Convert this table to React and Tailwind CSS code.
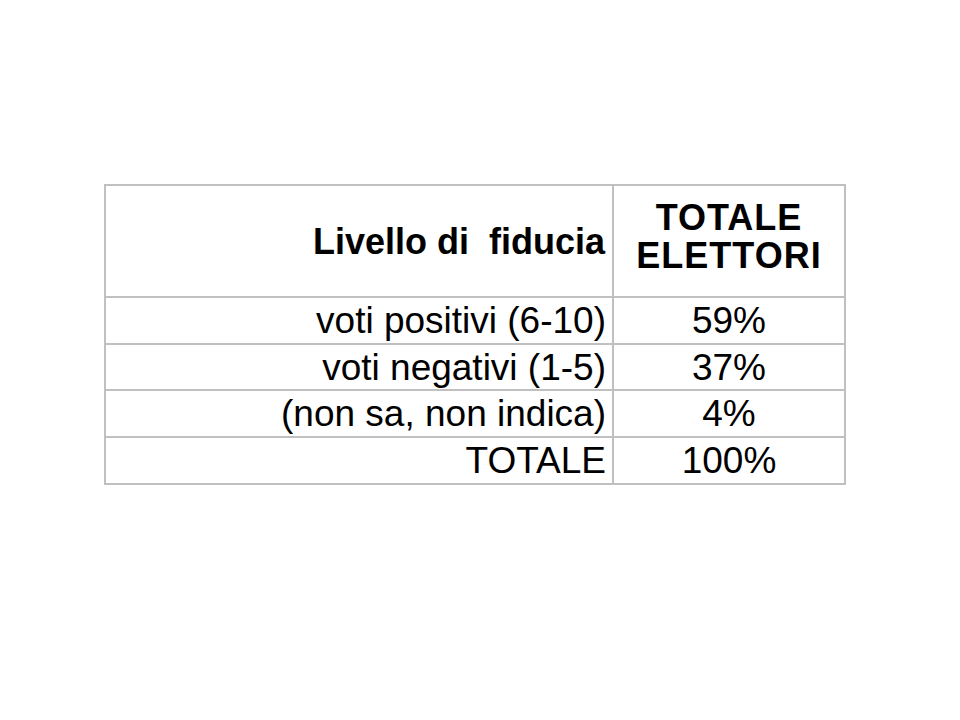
const rows = [
  { label: "voti positivi (6-10)", value: "59%", h: "h-[47px]" },
  { label: "voti negativi (1-5)", value: "37%", h: "h-[46px]" },
  { label: "(non sa, non indica)", value: "4%", h: "h-[47px]" },
  { label: "TOTALE", value: "100%", h: "h-[47px]" },
];

export default function App() {
  return (
    <main
      className="min-h-[720px] w-[960px] bg-white pt-[184px] pl-[104px] text-black"
      style={{ fontFamily: '"Liberation Sans", Arial, sans-serif' }}
    >
      <div className="w-[742px] border-t-2 border-l-2 border-[#c0c0c0] text-[37px]">
        {/* header */}
        <div className="flex h-[112px]">
          <div className="flex w-[508px] items-center justify-end border-r-2 border-b-2 border-[#c0c0c0] pr-[7px] text-[36px] font-bold leading-[41px] whitespace-pre">
            Livello di  fiducia
          </div>
          <div className="flex flex-1 flex-col items-center justify-center border-r-2 border-b-2 border-[#c0c0c0] pb-2 text-[36px] font-bold leading-[38px] tracking-[1px]">
            <span>TOTALE</span>
            <span>ELETTORI</span>
          </div>
        </div>

        {rows.map((r) => (
          <div key={r.label} className="flex">
            <div
              className={`flex w-[508px] items-center justify-end border-r-2 border-b-2 border-[#c0c0c0] pr-[6px] leading-[41px] ${r.h}`}
            >
              {r.label}
            </div>
            <div className="flex flex-1 items-center justify-center border-r-2 border-b-2 border-[#c0c0c0] leading-[41px]">
              {r.value}
            </div>
          </div>
        ))}
      </div>
    </main>
  );
}
